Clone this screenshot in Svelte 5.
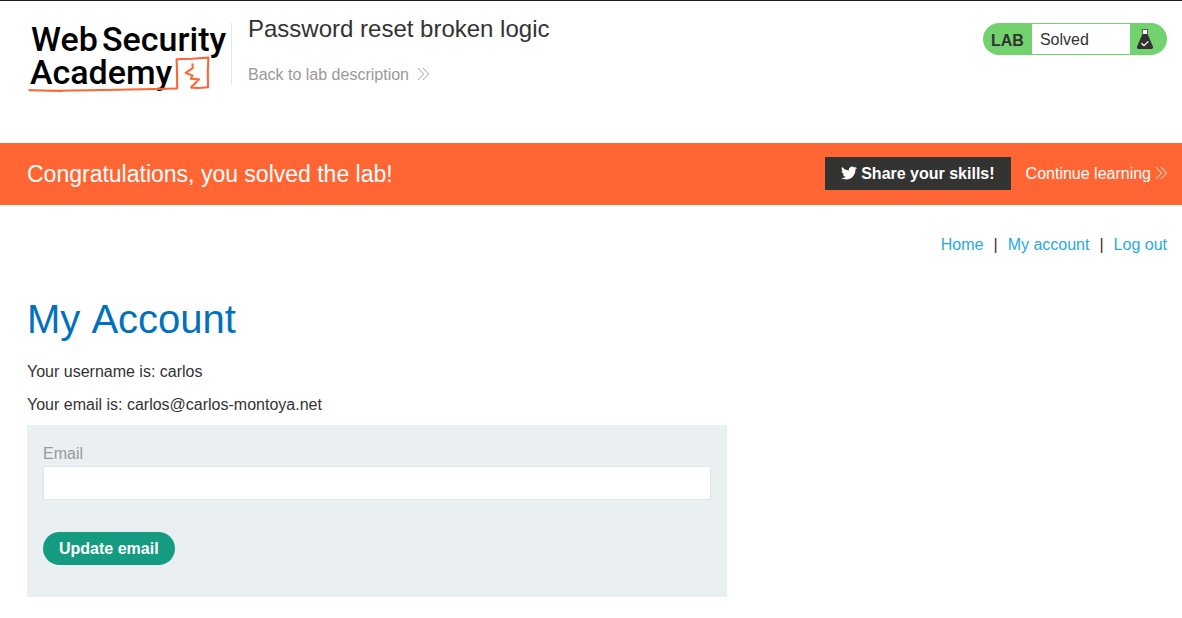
<script>
  let email = $state('');
  const links = ['Home', 'My account', 'Log out'];
</script>

{#snippet chevrons()}
  <svg viewBox="0 0 12 14" width="12" height="14" aria-hidden="true">
    <path d="M1 1L6.5 7L1 13M6 1L11.5 7L6 13" fill="none" stroke="currentColor" stroke-width="0.9" />
  </svg>
{/snippet}

<header>
  <a class="logo" href="#academy" aria-label="Web Security Academy">
    <svg viewBox="0 0 204 78" width="204" height="78">
      <g class="wordmark">
        <text x="4" y="34">Web</text>
        <text x="75" y="34">Security</text>
        <text x="3" y="67">Academy</text>
      </g>
      <g fill="none" stroke="#ff6633" stroke-linejoin="round">
        <path d="M2 73.2L31 73.8L91 72.8L150 71.4" stroke-width="2" />
        <path d="M1 73L35 74.4" stroke-width="1" />
        <path d="M150.2 72L150 55L149.6 42.2L165 41.8L181.4 40.6L180.8 54L181 70.2L172 71L164 70.8" stroke-width="2.1" />
        <path d="M165.4 46.4L165.8 51L158.6 55.8L165.6 58.6L163.8 61.8L172 62.4L163.6 70.8" stroke-width="2.1" />
      </g>
    </svg>
  </a>
  <div class="title">
    <h2>Password reset broken logic</h2>
    <a class="back" href="#lab">Back to lab description {@render chevrons()}</a>
  </div>
  <div class="status">
    <span class="tag">LAB</span>
    <p>Solved</p>
    <span class="flask">
      <svg viewBox="0 0 18 22" width="18" height="22" aria-hidden="true">
        <path d="M6.7 2H11.3V6L12 8H6L6.7 6Z" fill="#fff" />
        <path d="M5.5 1.5H12.5M6.5 2V6M11.5 2V6" fill="none" stroke="#555" stroke-width="0.9" />
        <path d="M6.4 6H11.6L16.9 18.6Q17.6 21 15.4 21H2.6Q0.4 21 1.1 18.6Z" fill="#333332" />
        <path d="M5.4 15.2L8 17.6L12.4 13.4" fill="none" stroke="#fff" stroke-width="1.3" />
      </svg>
    </span>
  </div>
</header>

<section class="banner">
  <h4>Congratulations, you solved the lab!</h4>
  <div class="actions">
    <button class="share" type="button">
      <svg viewBox="0 0 24 24" width="16" height="16" aria-hidden="true">
        <path fill="#fff" d="M23.95 4.57a10 10 0 0 1-2.82.77 4.96 4.96 0 0 0 2.16-2.72c-.95.55-2 .96-3.13 1.18a4.92 4.92 0 0 0-8.38 4.48C7.69 8.1 4.07 6.13 1.64 3.16a4.82 4.82 0 0 0-.67 2.48c0 1.71.87 3.21 2.19 4.1a4.9 4.9 0 0 1-2.23-.62v.06a4.92 4.92 0 0 0 3.95 4.83 5 5 0 0 1-2.21.08 4.94 4.94 0 0 0 4.6 3.42A9.87 9.87 0 0 1 0 19.54a13.99 13.99 0 0 0 7.55 2.21c9.05 0 14-7.5 14-13.98 0-.21 0-.42-.02-.63a9.94 9.94 0 0 0 2.42-2.57z" />
      </svg>
      Share your skills!
    </button>
    <a class="continue" href="#continue">Continue learning {@render chevrons()}</a>
  </div>
</section>

<nav>
  {#each links as link, i}
    {#if i > 0}<span>|</span>{/if}
    <a href="#{link.toLowerCase().replace(' ', '-')}">{link}</a>
  {/each}
</nav>

<main>
  <h1>My Account</h1>
  <p>Your username is: carlos</p>
  <p>Your email is: carlos@carlos-montoya.net</p>
  <form onsubmit={(e) => e.preventDefault()}>
    <label for="email">Email</label>
    <input id="email" type="email" bind:value={email} />
    <button type="submit">Update email</button>
  </form>
</main>

<style>
  :global(body) {
    background: #fff;
    border-top: 1px solid #1c1c22;
    color: #333332;
    font: 16px/19px 'Liberation Sans', Arial, sans-serif;
  }

  h1, h2, h4, p {
    margin: 0;
    font-weight: 400;
  }

  a {
    text-decoration: none;
  }

  button {
    border: 0;
    color: #fff;
    font: inherit;
    font-weight: 700;
    cursor: pointer;
  }

  header {
    display: flex;
    align-items: flex-start;
    min-height: 126px;
    padding: 16px 15px 0 27px;
  }

  .logo svg {
    display: block;
  }

  .wordmark {
    font-family: Roboto, sans-serif;
    font-size: 34px;
    font-weight: 500;
    fill: #000;
  }

  .title {
    flex: 1;
    height: 62px;
    margin-top: 6px;
    border-left: 1px solid #e4e4e4;
    padding-left: 16px;
  }

  h2 {
    margin-top: -8px;
    font-size: 24px;
    line-height: 28px;
  }

  .back {
    display: flex;
    align-items: center;
    gap: 8px;
    margin-top: 22px;
    color: #999;
  }

  .back svg {
    margin-bottom: 2px;
  }

  .status {
    display: flex;
    align-items: stretch;
    width: 184px;
    height: 32px;
    margin-top: 6px;
    border-radius: 16px;
    background: #72d36e;
  }

  .tag {
    padding: 0 8px;
    font-weight: 700;
    line-height: 35px;
  }

  .status p {
    flex: 1;
    margin: 1px 0;
    padding-left: 8px;
    background: #fff;
    line-height: 31px;
  }

  .flask {
    width: 31px;
    padding: 5px 0 0 6px;
    box-sizing: border-box;
    margin-right: 6px;
  }

  .banner {
    display: flex;
    align-items: center;
    justify-content: space-between;
    min-height: 62px;
    padding: 0 15px 0 27px;
    background: #ff6633;
    color: #fff;
  }

  h4 {
    font-size: 23px;
    line-height: 26px;
  }

  .actions,
  .share,
  .continue {
    display: flex;
    align-items: center;
  }

  .actions {
    gap: 15px;
    padding-bottom: 2px;
  }

  .share {
    gap: 4px;
    height: 33px;
    padding: 0 16px;
    background: #333332;
  }

  .continue {
    gap: 4px;
    color: #fff;
  }

  nav {
    display: flex;
    justify-content: flex-end;
    gap: 10px;
    padding: 30px 15px 0;
  }

  nav a {
    color: #29a9e1;
  }

  main {
    padding: 42px 27px 21px;
  }

  h1 {
    margin-bottom: 20px;
    color: #0071bc;
    font-size: 40px;
    font-kerning: none;
    line-height: 46px;
  }

  p + p {
    margin-top: 14px;
  }

  form {
    display: flex;
    flex-direction: column;
    align-items: flex-start;
    max-width: 700px;
    box-sizing: border-box;
    margin-top: 11px;
    padding: 19px 16px 32px;
    background: #eaeff2;
  }

  label {
    color: #999;
  }

  input {
    width: 100%;
    height: 34px;
    box-sizing: border-box;
    margin: 3px 0 32px;
    border: 1px solid #e0e4e6;
    padding: 0 8px;
    background: #fff;
    font: inherit;
  }

  form button {
    height: 33px;
    padding: 0 16px;
    border-radius: 17px;
    background: #159c80;
  }
</style>
